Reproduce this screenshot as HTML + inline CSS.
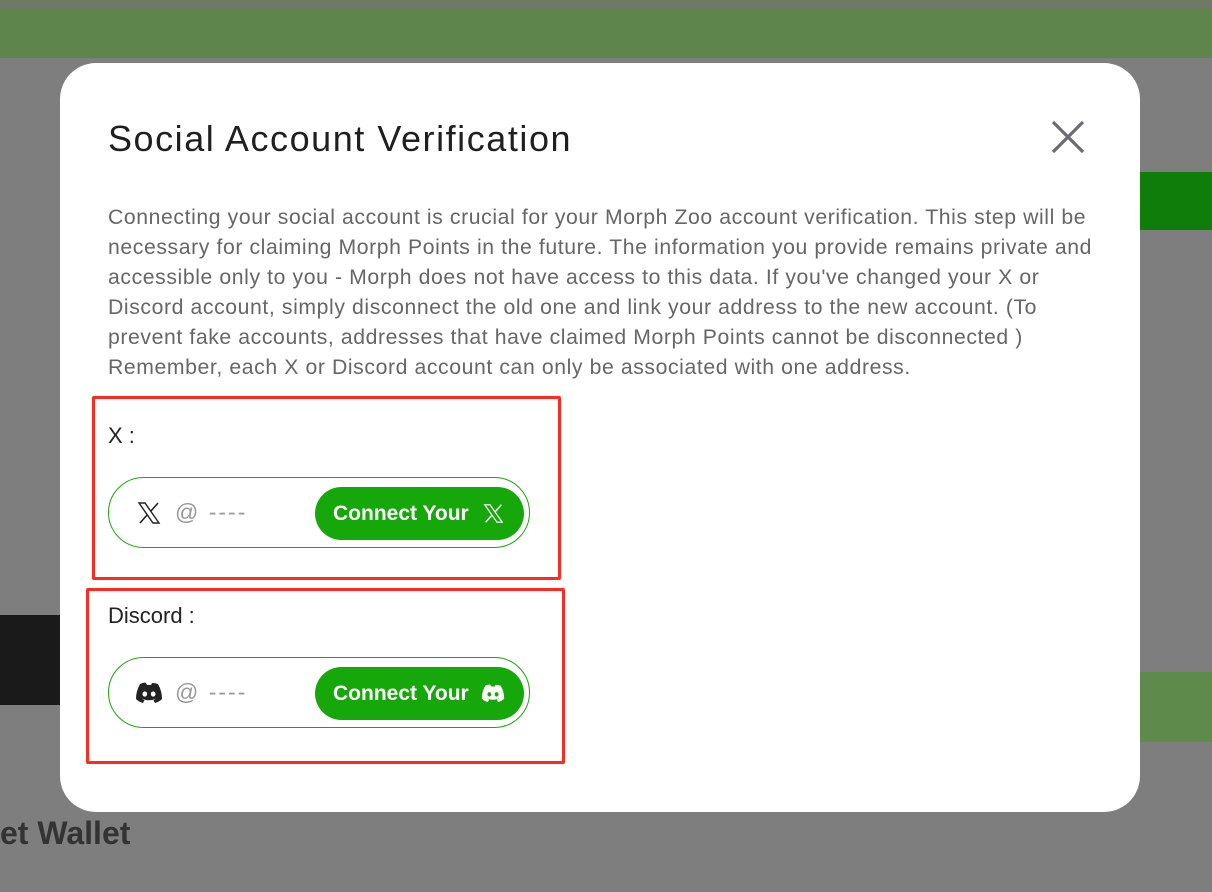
<!DOCTYPE html>
<html><head><style>
body{margin:0;width:1212px;height:892px;overflow:hidden;background:#7e7e7e;font-family:"Liberation Sans",sans-serif;position:relative}
.top{position:absolute;left:0;top:0;width:1212px;height:58px;background:#5f864a}
.top2{position:absolute;left:0;top:0;width:1212px;height:10px;background:#6e7a66}
.modal{position:absolute;left:60px;top:63px;width:1080px;height:749px;background:#fff;border-radius:36px}
h1{position:absolute;left:48px;top:55px;margin:0;font-size:36px;letter-spacing:1.55px;font-weight:400;color:#1f1f1f;white-space:nowrap}
.close{position:absolute;left:990px;top:56px}
p{position:absolute;left:48px;top:140px;width:1010px;margin:0;font-size:21.2px;letter-spacing:0.6px;line-height:30px;color:#666;white-space:nowrap}
.box{position:absolute;border:3px solid #ff2a1f;border-radius:2px}
.lab{position:absolute;left:48px;font-size:22px;color:#222}
.pill{position:absolute;left:48px;width:420px;height:69px;border:1px solid #1aa70a;border-radius:36px}
.btn{position:absolute;left:206px;top:9px;width:209px;height:53px;background:#16a80a;border-radius:27px;color:#fff;font-weight:700;font-size:21px;line-height:53px;box-sizing:border-box;padding-left:18px}
.at{position:absolute;left:66px;top:21px;font-size:23px;color:#999;letter-spacing:2px}
</style></head><body>
<div class="top"></div><div class="top2"></div>
<div style="position:absolute;left:0;top:615px;width:60px;height:90px;background:#1a1a1a"></div>
<div style="position:absolute;left:1140px;top:172px;width:72px;height:58px;background:#0e7d0a"></div>
<div style="position:absolute;left:1140px;top:672px;width:72px;height:70px;background:#5e8a4c"></div>
<div class="modal">
<h1>Social Account Verification</h1>
<svg class="close" width="36" height="36" viewBox="0 0 36 36"><path d="M3 3L33 33M33 3L3 33" stroke="#6b6b73" stroke-width="3.2"/></svg>
<p>Connecting your social account is crucial for your Morph Zoo account verification. This step will be<br>necessary for claiming Morph Points in the future. The information you provide remains private and<br>accessible only to you - Morph does not have access to this data. If you've changed your X or<br>Discord account, simply disconnect the old one and link your address to the new account. (To<br>prevent fake accounts, addresses that have claimed Morph Points cannot be disconnected )<br>Remember, each X or Discord account can only be associated with one address.</p>
<div class="box" style="left:32px;top:333px;width:463px;height:178px"></div>
<div class="box" style="left:26px;top:525px;width:473px;height:170px"></div>
<div class="lab" style="top:360px">X :</div>
<div class="lab" style="top:540px">Discord :</div>
<div class="pill" style="top:414px">
<svg style="position:absolute;left:28px;top:23px" width="24" height="24" viewBox="0 0 24 24"><path d="M2 2h6l14 20h-6z" fill="none" stroke="#222" stroke-width="1.4"/><path d="M21 2L13.5 10.5M10.5 13.5L3 22" stroke="#222" stroke-width="1.6"/></svg>
<span class="at">@ ----</span>
<div class="btn">Connect Your <svg style="position:absolute;left:168px;top:16px" width="21" height="21" viewBox="0 0 24 24"><path d="M2 2h6l14 20h-6z" fill="none" stroke="#fff" stroke-width="1.4"/><path d="M21 2L13.5 10.5M10.5 13.5L3 22" stroke="#fff" stroke-width="1.6"/></svg></div>
</div>
<div class="pill" style="top:594px">
<svg style="position:absolute;left:26px;top:24px" width="28" height="22" viewBox="0 0 28 22"><path d="M5 2Q9 0 11 1L12 3Q14 2.7 16 3L17 1Q20 1 23 2Q27 9 27 17Q24 20 20 21L18.5 18Q20 17.5 21.5 16.5Q14 20 6.5 16.5Q8 17.5 9.5 18L8 21Q4 20 1 17Q1 9 5 2Z" fill="#222"/><ellipse cx="9.8" cy="12" rx="2.3" ry="2.6" fill="#fff"/><ellipse cx="18.2" cy="12" rx="2.3" ry="2.6" fill="#fff"/></svg>
<span class="at">@ ----</span>
<div class="btn">Connect Your <svg style="position:absolute;left:166px;top:17px" width="24" height="19" viewBox="0 0 28 22"><path d="M5 2Q9 0 11 1L12 3Q14 2.7 16 3L17 1Q20 1 23 2Q27 9 27 17Q24 20 20 21L18.5 18Q20 17.5 21.5 16.5Q14 20 6.5 16.5Q8 17.5 9.5 18L8 21Q4 20 1 17Q1 9 5 2Z" fill="#fff"/><ellipse cx="9.8" cy="12" rx="2.3" ry="2.6" fill="#16a80a"/><ellipse cx="18.2" cy="12" rx="2.3" ry="2.6" fill="#16a80a"/></svg></div>
</div>
</div>
<div style="position:absolute;left:0;top:815px;font-size:32px;font-weight:700;color:#333">et Wallet</div>
</body></html>
